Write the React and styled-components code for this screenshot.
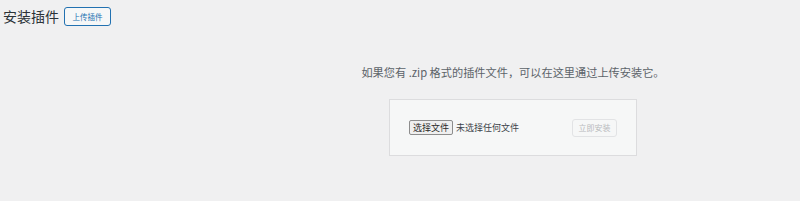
import React from "react";
import styled, { createGlobalStyle } from "styled-components";

const GlobalStyle = createGlobalStyle`
  body {
    margin: 0;
    background: #f0f0f1;
    font-family: "Noto Sans CJK SC", "Noto Sans", sans-serif;
    color: #3c434a;
  }
`;

const Page = styled.div`
  height: 201px;
  display: flex;
  flex-direction: column;
`;

const Header = styled.div`
  display: flex;
  align-items: center;
  gap: 5px;
  padding: 7px 0 0 3px;
`;

const Title = styled.h1`
  margin: 0;
  font-size: 14px;
  font-weight: 400;
  line-height: 19px;
  color: #2c3338;
`;

const PageAction = styled.button`
  box-sizing: border-box;
  height: 19px;
  width: 47px;
  padding: 0;
  font-family: inherit;
  font-size: 7.5px;
  line-height: 17px;
  color: #2271b1;
  background: #f6f7f7;
  border: 1px solid #2271b1;
  border-radius: 3px;
`;

const UploadArea = styled.div`
  margin-left: 226px;
  display: flex;
  flex-direction: column;
  align-items: center;
  padding-top: 38px;
`;

const Help = styled.p`
  margin: 0 0 18px;
  font-size: 11.2px;
  line-height: 17px;
  color: #5c6369;
`;

const UploadForm = styled.form`
  box-sizing: border-box;
  width: 248px;
  height: 57px;
  display: flex;
  align-items: center;
  justify-content: space-between;
  padding: 0 19px 0 19px;
  background: #f6f7f7;
  border: 1px solid #dcdcde;
`;

const FilePicker = styled.div`
  display: flex;
  align-items: center;
  gap: 3px;
`;

const ChooseButton = styled.button`
  box-sizing: border-box;
  height: 15px;
  width: 44px;
  padding: 0;
  font-family: inherit;
  font-size: 9px;
  line-height: 13px;
  color: #2a2a2a;
  background: #efefef;
  border: 1px solid #8d8d8d;
  border-radius: 2px;
`;

const FileName = styled.span`
  font-size: 9px;
  color: #3c434a;
`;

const InstallButton = styled.button`
  box-sizing: border-box;
  height: 18px;
  width: 45px;
  padding: 0;
  font-family: inherit;
  font-size: 8px;
  line-height: 16px;
  color: #b8babd;
  background: #f6f7f7;
  border: 1px solid #e2e3e5;
  border-radius: 3px;
`;

export default function App() {
  return (
    <>
      <GlobalStyle />
      <Page>
        <Header>
          <Title>安装插件</Title>
          <PageAction type="button">上传插件</PageAction>
        </Header>
        <UploadArea>
          <Help>如果您有 .zip 格式的插件文件，可以在这里通过上传安装它。</Help>
          <UploadForm onSubmit={(e) => e.preventDefault()}>
            <FilePicker>
              <ChooseButton type="button">选择文件</ChooseButton>
              <FileName>未选择任何文件</FileName>
            </FilePicker>
            <InstallButton type="submit" disabled>
              立即安装
            </InstallButton>
          </UploadForm>
        </UploadArea>
      </Page>
    </>
  );
}
